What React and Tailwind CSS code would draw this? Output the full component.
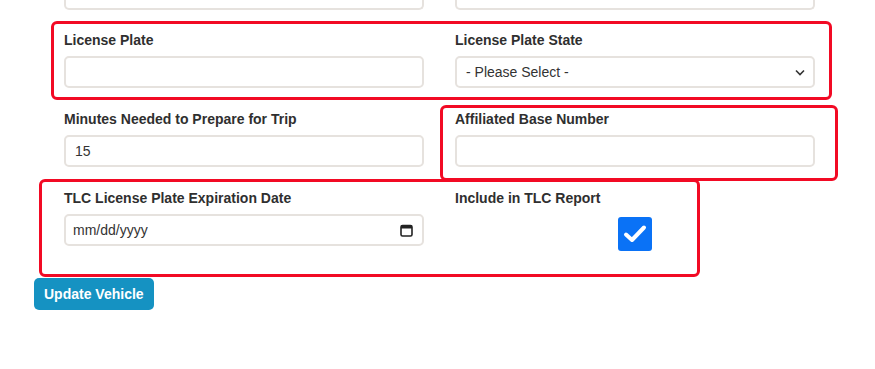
import React from "react";

const font = { fontFamily: '"Liberation Sans", Arial, sans-serif' };

function Label({ children }) {
  return (
    <div className="text-[14px] leading-[20px] font-bold text-[#2f2f2f] h-[20px]">
      {children}
    </div>
  );
}

const inputCls =
  "block w-full h-[32px] mt-[6px] rounded-[5px] border-2 border-[#e6e2de] bg-white px-[9px] text-[14px] text-[#333] outline-none";

export default function App() {
  return (
    <div
      className="relative w-[875px] h-[369px] bg-white overflow-hidden"
      style={font}
    >
      <div className="pl-[64px]">
        <div className="grid grid-cols-[360px_360px] gap-x-[31px]">
          <div className="h-[10px] border-2 border-t-0 border-[#e6e2de] rounded-b-[5px]" />
          <div className="h-[10px] border-2 border-t-0 border-[#e6e2de] rounded-b-[5px]" />
        </div>
        <div className="grid grid-cols-[360px_360px] gap-x-[31px] mt-[20px]">
          <div>
            <Label>License Plate</Label>
            <input className={inputCls} />
          </div>
          <div>
            <Label>License Plate State</Label>
            <div className="relative mt-[6px]">
              <div className="flex items-center h-[32px] rounded-[5px] border-2 border-[#e6e2de] bg-white pl-[9px] pr-[8px] text-[14px] text-[#333]">
                <span className="flex-1">- Please Select -</span>
                <svg width="10" height="7" viewBox="0 0 10 7">
                  <path d="M1 1.5 L5 5.5 L9 1.5" fill="none" stroke="#333" strokeWidth="1.6" />
                </svg>
              </div>
            </div>
          </div>
        </div>
        <div className="grid grid-cols-[360px_360px] gap-x-[31px] mt-[21px]">
          <div>
            <Label>Minutes Needed to Prepare for Trip</Label>
            <input className={inputCls} defaultValue="15" />
          </div>
          <div>
            <Label>Affiliated Base Number</Label>
            <input className={inputCls} />
          </div>
        </div>
        <div className="grid grid-cols-[360px_360px] gap-x-[31px] mt-[21px]">
          <div>
            <Label>TLC License Plate Expiration Date</Label>
            <div className="flex items-center h-[32px] mt-[6px] rounded-[5px] border-2 border-[#e6e2de] bg-white pl-[7px] pr-[9px] text-[14px] text-[#333]">
              <span className="flex-1">mm/dd/yyyy</span>
              <svg width="13" height="13" viewBox="0 0 13 13">
                <rect x="1" y="1.5" width="11" height="10.5" rx="1.5" fill="none" stroke="#222" strokeWidth="1.6" />
                <rect x="1" y="1.5" width="11" height="3" fill="#222" />
              </svg>
            </div>
          </div>
          <div>
            <Label>Include in TLC Report</Label>
            <div className="flex justify-center mt-[9px]">
              <div className="w-[34px] h-[34px] rounded-[3px] bg-[#0a72f6] flex items-center justify-center">
                <svg width="24" height="20" viewBox="0 0 24 20">
                  <path d="M3 10.5 L9 16 L21 3.5" fill="none" stroke="white" strokeWidth="4" strokeLinecap="round" strokeLinejoin="round" />
                </svg>
              </div>
            </div>
          </div>
        </div>
      </div>
      <div className="pl-[34px] mt-[27px]">
        <button className="h-[32px] px-[10px] rounded-[5px] bg-[#1592c2] text-white text-[14px] font-bold">
          Update Vehicle
        </button>
      </div>

      {/* annotation overlays */}
      <div className="absolute left-[51px] top-[21px] w-[781px] h-[79px] border-[3px] border-[#f20a24] rounded-[6px] pointer-events-none" />
      <div className="absolute left-[440px] top-[105px] w-[398px] h-[76px] border-[3px] border-[#f20a24] rounded-[6px] pointer-events-none" />
      <div className="absolute left-[39px] top-[179px] w-[661px] h-[98px] border-[3px] border-[#f20a24] rounded-[6px] pointer-events-none" />
    </div>
  );
}
